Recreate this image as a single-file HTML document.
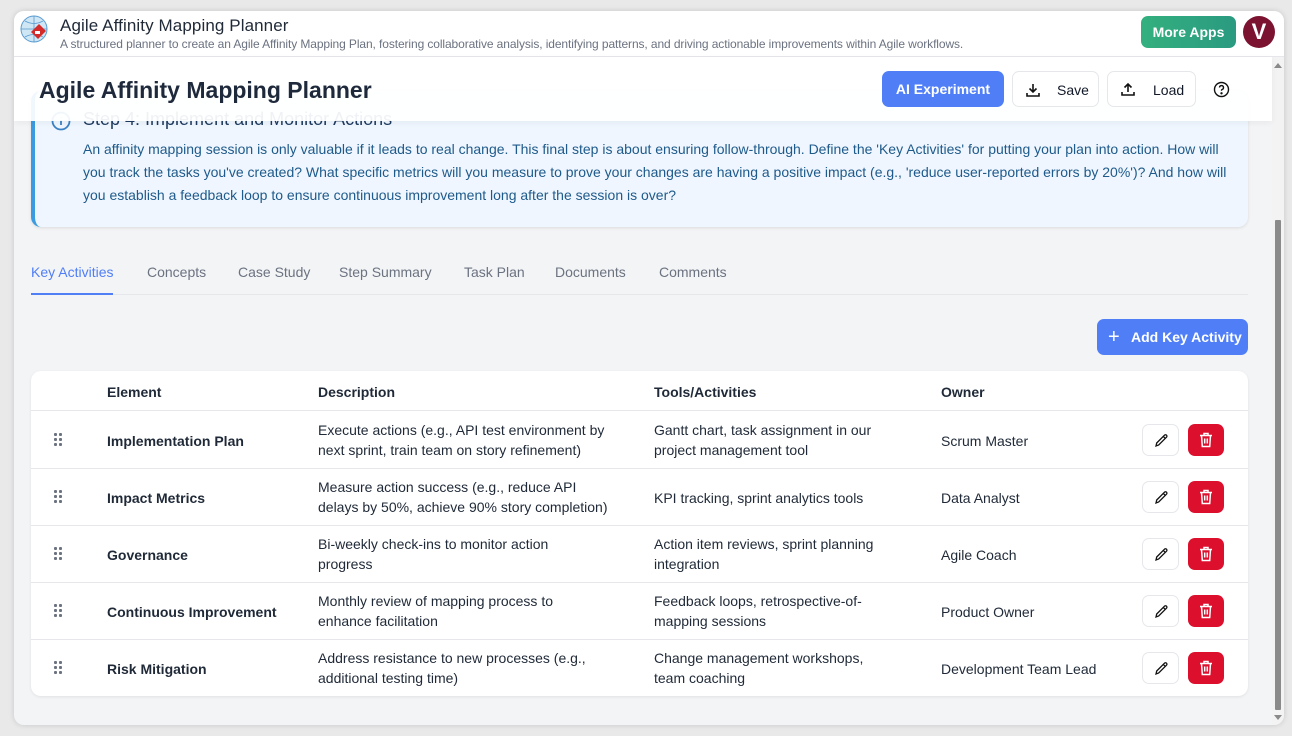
<!DOCTYPE html>
<html><head><meta charset="utf-8"><style>
*{box-sizing:border-box;margin:0;padding:0}
body{width:1292px;height:736px;background:#e9e9ea;font-family:"Liberation Sans",sans-serif;position:relative;overflow:hidden;color:#111827}
.win{position:absolute;left:14px;top:11px;width:1270px;height:714px;background:#f3f4f6;border-radius:10px;overflow:hidden;box-shadow:0 0 6px rgba(0,0,0,.15)}
.top{position:absolute;left:0;top:0;width:1270px;height:46px;background:#fff;border-bottom:1px solid #e5e7eb}
.top h1{position:absolute;left:46px;top:5px;font-size:17px;font-weight:normal;color:#1f2937;letter-spacing:.1px}
.top p{position:absolute;left:46px;top:26px;font-size:12px;color:#6b7280;letter-spacing:-.1px}
.more{position:absolute;left:1127px;top:5px;width:95px;height:32px;border-radius:7px;background:linear-gradient(90deg,#34b07f,#2a9a80);color:#fff;font-weight:bold;font-size:14px;text-align:center;line-height:32px}
.av{position:absolute;left:1229px;top:5px;width:32px;height:32px;border-radius:50%;background:#7b1330;color:#fff;font-weight:bold;font-size:22px;text-align:center;line-height:32px}
.sticky{position:absolute;left:0;top:46px;width:1258px;height:64px;background:rgba(255,255,255,.93);box-shadow:0 2px 6px rgba(0,0,0,.05);z-index:2}
.sticky h2{position:absolute;left:25px;top:20px;font-size:23px;font-weight:bold;color:#1e293b}
.btn{position:absolute;top:14px;height:36px;border-radius:7px;font-size:14px;line-height:36px}
.info{position:absolute;left:17px;top:80px;width:1217px;height:136px;background:#eff6ff;border-left:4px solid #3b9be0;border-radius:10px;box-shadow:0 1px 3px rgba(0,0,0,.1)}
.info h3{position:absolute;left:48px;top:18px;font-size:18px;font-weight:normal;color:#1e3a5f}
.info p{position:absolute;left:48px;top:47px;width:1150px;font-size:14px;line-height:23px;color:#1e5a8a}
.tabs{position:absolute;left:17px;top:253px;width:1217px;height:31px;border-bottom:1px solid #e5e7eb;font-size:14px;color:#6b7280}
.tabs span{position:absolute;top:0}
.add{position:absolute;left:1083px;top:308px;width:151px;height:36px;border-radius:7px;background:#4f7ef7;color:#fff;font-weight:bold;font-size:14px;line-height:36px}
.tbl{position:absolute;left:17px;top:360px;width:1217px;height:325px;background:#fff;border-radius:10px;box-shadow:0 1px 3px rgba(0,0,0,.08);font-size:14px}
.hd{position:absolute;top:0;left:0;width:100%;height:40px;border-bottom:1px solid #e5e7eb;font-weight:bold;color:#1f2937}
.hd span,.r span{position:absolute}
.hd span{top:13px}
.r{position:absolute;left:0;width:100%;height:57px;border-bottom:1px solid #e5e7eb;color:#1f2937}
.r span{line-height:20px}
.e{left:76px;top:19px;font-weight:bold}
.d{left:287px;top:8px;width:300px}
.t{left:623px;top:8px;width:250px}
.o{left:910px;top:19px}
.dots{left:22px;top:20px;width:10px;height:16px;background-image:radial-gradient(circle,#6b7280 1.5px,transparent 1.7px);background-size:5px 5px}
.ed{position:absolute;left:1111px;top:12px;width:37px;height:32px;border:1px solid #e5e7eb;border-radius:7px;background:#fff}
.dl{position:absolute;left:1157px;top:12px;width:36px;height:32px;border-radius:7px;background:#dc0f2d}
.sb{position:absolute;left:1258px;top:46px;width:12px;height:668px;background:#f3f3f3}
</style></head><body>
<div class="win">
<div class="top">
<svg style="position:absolute;left:6px;top:4px" width="30" height="30" viewBox="0 0 30 30"><circle cx="14" cy="14" r="13" fill="#cfe6f5" stroke="#5a9bd0"/><path d="M1 14h26M14 1v26M5 6q9 5 18 0M5 22q9-5 18 0" stroke="#5a9bd0" fill="none" stroke-width=".8"/><path d="M11 17l8-8 7 7-8 8z" fill="#d42a2a"/><path d="M15 16h5v3h-5z" fill="#fff"/></svg>
<h1>Agile Affinity Mapping Planner</h1>
<p>A structured planner to create an Agile Affinity Mapping Plan, fostering collaborative analysis, identifying patterns, and driving actionable improvements within Agile workflows.</p>
<div class="more">More Apps</div><div class="av">V</div>
</div>
<div class="sticky">
<h2>Agile Affinity Mapping Planner</h2>
<div class="btn" style="left:868px;width:122px;background:#4f7ef7;color:#fff;font-weight:bold;text-align:center">AI Experiment</div>
<div class="btn" style="left:998px;width:87px;background:#fff;border:1px solid #e5e7eb"><svg style="position:absolute;left:12px;top:10px" width="16" height="16" viewBox="0 0 16 16" fill="none" stroke="#111" stroke-width="1.6"><path d="M8 2v8M4.5 6.5L8 10l3.5-3.5M2 11v3h12v-3"/></svg><span style="position:absolute;left:44px">Save</span></div>
<div class="btn" style="left:1093px;width:89px;background:#fff;border:1px solid #e5e7eb"><svg style="position:absolute;left:12px;top:9px" width="16" height="16" viewBox="0 0 16 16" fill="none" stroke="#111" stroke-width="1.6"><path d="M8 11V3M4.5 6.5L8 3l3.5 3.5M2 11v3h12v-3"/></svg><span style="position:absolute;left:45px">Load</span></div>
<svg style="position:absolute;left:1199px;top:24px" width="17" height="17" viewBox="0 0 17 17" fill="none" stroke="#111" stroke-width="1.4"><circle cx="8.5" cy="8.5" r="7"/><path d="M6.5 6.5a2 2 0 1 1 2.5 2c-.5.2-.5.6-.5 1.3"/><circle cx="8.5" cy="12.3" r=".5" fill="#111"/></svg>
</div>
<div class="info">
<svg style="position:absolute;left:16px;top:20px" width="20" height="20" viewBox="0 0 20 20" fill="none" stroke="#3b82c4" stroke-width="1.8"><circle cx="10" cy="10" r="8.5"/><path d="M10 9v5M10 6v.5"/></svg>
<h3>Step 4: Implement and Monitor Actions</h3>
<p>An affinity mapping session is only valuable if it leads to real change. This final step is about ensuring follow-through. Define the 'Key Activities' for putting your plan into action. How will you track the tasks you've created? What specific metrics will you measure to prove your changes are having a positive impact (e.g., 'reduce user-reported errors by 20%')? And how will you establish a feedback loop to ensure continuous improvement long after the session is over?</p></div>
<div class="tabs">
<span style="left:0;color:#4f7ef7;border-bottom:2px solid #4f7ef7;height:31px">Key Activities</span>
<span style="left:116px">Concepts</span><span style="left:207px">Case Study</span><span style="left:308px">Step Summary</span><span style="left:433px">Task Plan</span><span style="left:524px">Documents</span><span style="left:628px">Comments</span>
</div>
<div class="add"><span style="position:absolute;left:11px;font-size:20px;font-weight:normal">+</span><span style="position:absolute;left:34px">Add Key Activity</span></div>
<div class="tbl">
<div class="hd"><span style="left:76px">Element</span><span style="left:287px">Description</span><span style="left:623px">Tools/Activities</span><span style="left:910px">Owner</span></div>
<div class="r" style="top:41px"><span class="dots"></span><span class="e">Implementation Plan</span><span class="d">Execute actions (e.g., API test environment by next sprint, train team on story refinement)</span><span class="t">Gantt chart, task assignment in our project management tool</span><span class="o">Scrum Master</span><div class="ed"></div><div class="dl"></div></div>
<div class="r" style="top:98px"><span class="dots"></span><span class="e">Impact Metrics</span><span class="d">Measure action success (e.g., reduce API delays by 50%, achieve 90% story completion)</span><span class="t" style="top:19px">KPI tracking, sprint analytics tools</span><span class="o">Data Analyst</span><div class="ed"></div><div class="dl"></div></div>
<div class="r" style="top:155px"><span class="dots"></span><span class="e">Governance</span><span class="d" style="width:260px">Bi-weekly check-ins to monitor action progress</span><span class="t">Action item reviews, sprint planning integration</span><span class="o">Agile Coach</span><div class="ed"></div><div class="dl"></div></div>
<div class="r" style="top:212px"><span class="dots"></span><span class="e">Continuous Improvement</span><span class="d" style="width:260px">Monthly review of mapping process to enhance facilitation</span><span class="t" style="width:220px">Feedback loops, retrospective-of-mapping sessions</span><span class="o">Product Owner</span><div class="ed"></div><div class="dl"></div></div>
<div class="r" style="top:269px;border-bottom:none"><span class="dots"></span><span class="e">Risk Mitigation</span><span class="d" style="width:280px">Address resistance to new processes (e.g., additional testing time)</span><span class="t" style="width:230px">Change management workshops, team coaching</span><span class="o">Development Team Lead</span><div class="ed"></div><div class="dl"></div></div>
</div>
<div class="sb">
<div style="position:absolute;left:2px;top:6px;width:0;height:0;border-left:4px solid transparent;border-right:4px solid transparent;border-bottom:5px solid #8a8a8a"></div>
<div style="position:absolute;left:3px;top:163px;width:6px;height:490px;background:#8a8a8a;border-radius:1px"></div>
<div style="position:absolute;left:2px;top:658px;width:0;height:0;border-left:4px solid transparent;border-right:4px solid transparent;border-top:5px solid #8a8a8a"></div>
</div>
</div>
<script>
document.querySelectorAll('.ed').forEach(e=>e.innerHTML='<svg style="position:absolute;left:11px;top:8px" width="15" height="15" viewBox="0 0 15 15" fill="none" stroke="#111" stroke-width="1.3"><path d="M2 13l.7-3L10.5 2.2a1.4 1.4 0 0 1 2 2L4.7 12z M9.3 3.4l2 2"/></svg>');
document.querySelectorAll('.dl').forEach(e=>e.innerHTML='<svg style="position:absolute;left:11px;top:8px" width="14" height="16" viewBox="0 0 14 16" fill="none" stroke="#fff" stroke-width="1.5"><path d="M1 3.5h12M5 3.5V1.5h4v2M2.5 3.5l.8 11h7.4l.8-11M5.7 6.5v5M8.3 6.5v5"/></svg>');
</script>
</body></html>
